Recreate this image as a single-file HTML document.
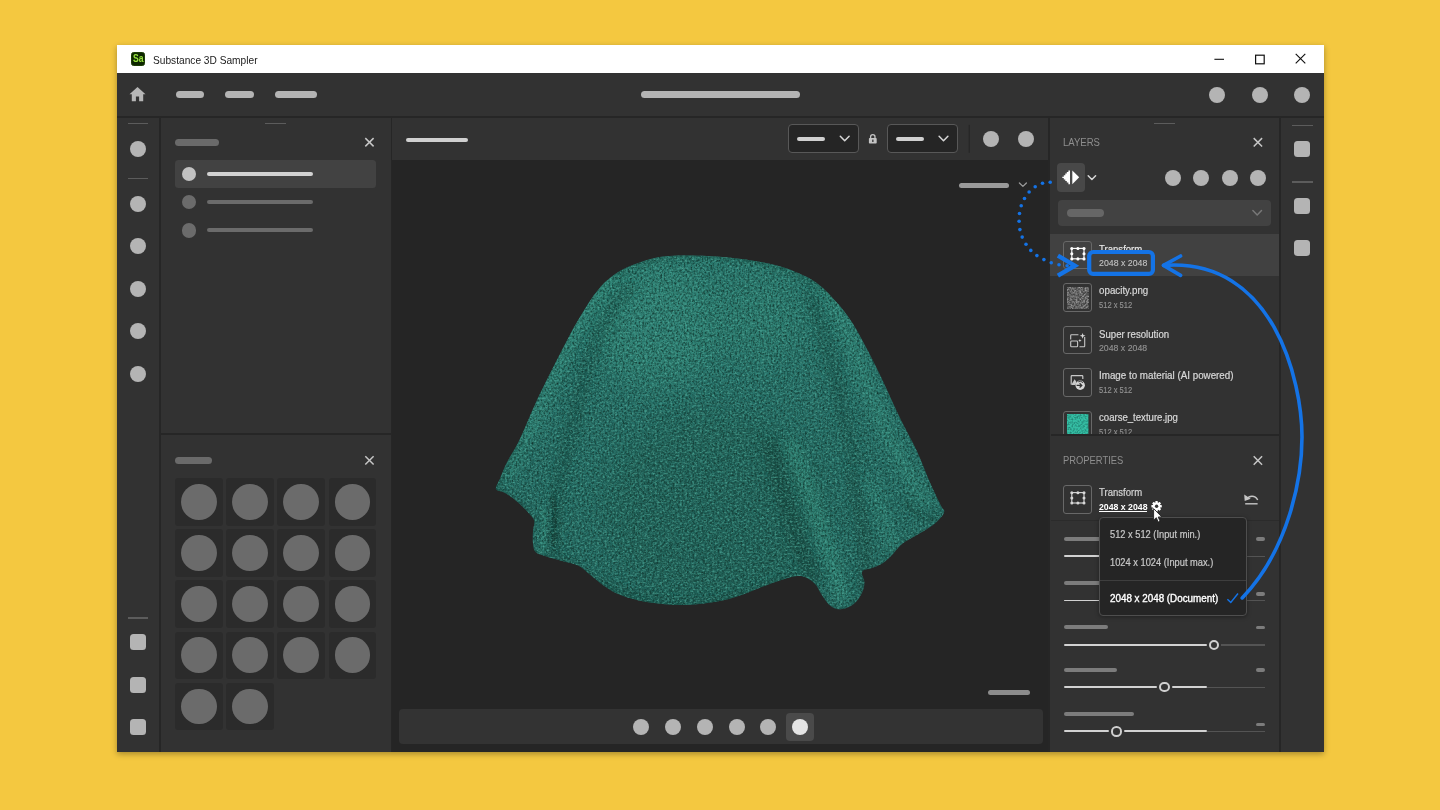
<!DOCTYPE html>
<html lang="en">
<head>
<meta charset="utf-8">
<title>Substance 3D Sampler</title>
<style>
*{box-sizing:border-box;margin:0;padding:0}
html,body{width:1440px;height:810px;overflow:hidden}
body{background:#f4c840;font-family:"Liberation Sans",sans-serif;position:relative}
.a{position:absolute}
#win{position:absolute;left:116.8px;top:45.1px;width:1207px;height:706.6px;background:#323232;box-shadow:0 1.5px 6px rgba(0,0,0,.32);overflow:hidden}
/* everything inside #win is positioned in PAGE coordinates via this shifter */
#o{position:absolute;left:-116.8px;top:-45.1px;width:1440px;height:810px}
.pill{position:absolute;border-radius:10px}
.c{position:absolute;border-radius:50%}
.sq{position:absolute;width:16px;height:16px;border-radius:3.5px;background:#b4b4b4}
.ln{position:absolute;height:1.6px;background:#5c5c5c}
.bd{position:absolute;background:#262626}
.tile{position:absolute;width:47.6px;height:47.6px;border-radius:3px;background:#2b2b2b}
.tile i{position:absolute;left:6px;top:5.8px;width:35.8px;height:35.8px;border-radius:50%;background:#6b6b6b}
.t{position:absolute;white-space:nowrap;line-height:1;transform-origin:0 50%}
.nm{font-size:10px;color:#d8d8d8;-webkit-text-stroke:.2px #d8d8d8}
.sz{font-size:9px;color:#929292;-webkit-text-stroke:.15px #929292}
.th{position:absolute;width:28.4px;height:28.4px;border:1px solid #686868;border-radius:3px}
svg{position:absolute;overflow:visible}
</style>
</head>
<body>
<div id="win"><div id="o">

<!-- TITLE BAR -->
<div class="a" id="titlebar" style="left:116px;top:45px;width:1209px;height:28.4px;background:#fff"></div>
<div class="a" style="left:130.8px;top:52px;width:14.5px;height:14.4px;border-radius:2.6px;background:#0d2600;border:1px solid #1c3d05"></div>
<div class="t" id="sa" style="left:132.7px;top:53.7px;font-size:10px;font-weight:bold;color:#98e43c;transform:scaleX(.86)">Sa</div>
<div class="t" id="title" style="transform:scaleX(0.884);left:152.6px;top:54.7px;font-size:11.5px;color:#1a1a1a;">Substance 3D Sampler</div>
<svg id="wc" style="left:1200px;top:45px" width="120" height="28" viewBox="1200 45 120 28">
  <path d="M1214.4 59.3h9.6" stroke="#111" stroke-width="1.1" fill="none"/>
  <rect x="1255.6" y="55.2" width="8.6" height="8.6" stroke="#111" stroke-width="1.2" fill="none"/>
  <path d="M1295.7 53.8l9.6 9.6M1305.3 53.8l-9.6 9.6" stroke="#111" stroke-width="1.15" fill="none"/>
</svg>

<!-- TOP TOOLBAR -->
<div class="bd" style="left:116px;top:115.8px;width:1209px;height:1.8px"></div>
<svg id="home" style="left:129px;top:86px" width="18" height="16" viewBox="129 86 18 16">
  <path d="M137.5 86.9l-8 7.3h2.3v7h4.1v-4.6h3.2v4.6h4.1v-7h2.3z" fill="#b6b6b6"/>
</svg>
<div class="pill" style="left:175.5px;top:90.7px;width:28.8px;height:7.6px;background:#b4b4b4"></div>
<div class="pill" style="left:225px;top:90.7px;width:28.8px;height:7.6px;background:#b4b4b4"></div>
<div class="pill" style="left:274.5px;top:90.7px;width:42.9px;height:7.6px;background:#b4b4b4"></div>
<div class="pill" style="left:640.5px;top:90.8px;width:159.3px;height:7.6px;background:#b4b4b4"></div>
<div class="c" style="left:1209.3px;top:86.6px;width:16px;height:16px;background:#b4b4b4"></div>
<div class="c" style="left:1251.6px;top:86.6px;width:16px;height:16px;background:#b4b4b4"></div>
<div class="c" style="left:1294px;top:86.6px;width:16px;height:16px;background:#b4b4b4"></div>

<!-- VERTICAL BORDERS -->
<div class="bd" style="left:159.2px;top:117px;width:1.8px;height:640px"></div>
<div class="bd" style="left:390.5px;top:117px;width:1.8px;height:640px"></div>
<div class="bd" style="left:1048.4px;top:117px;width:1.8px;height:640px"></div>
<div class="bd" style="left:1279.1px;top:117px;width:1.9px;height:640px"></div>

<!-- LEFT STRIP -->
<div class="ln" style="left:127.5px;top:122.7px;width:20.8px"></div>
<div class="c" style="left:129.8px;top:141px;width:16px;height:16px;background:#b4b4b4"></div>
<div class="ln" style="left:127.5px;top:177.6px;width:20.8px"></div>
<div class="c" style="left:129.8px;top:195.8px;width:16px;height:16px;background:#b4b4b4"></div>
<div class="c" style="left:129.8px;top:238.3px;width:16px;height:16px;background:#b4b4b4"></div>
<div class="c" style="left:129.8px;top:280.8px;width:16px;height:16px;background:#b4b4b4"></div>
<div class="c" style="left:129.8px;top:323.3px;width:16px;height:16px;background:#b4b4b4"></div>
<div class="c" style="left:129.8px;top:365.8px;width:16px;height:16px;background:#b4b4b4"></div>
<div class="ln" style="left:127.5px;top:617.2px;width:20.8px"></div>
<div class="sq" style="left:129.9px;top:634.2px"></div>
<div class="sq" style="left:129.9px;top:676.7px"></div>
<div class="sq" style="left:129.9px;top:719.2px"></div>

<!-- LEFT PANEL 1 -->
<div class="ln" style="left:265px;top:122.7px;width:21.2px"></div>
<div class="pill" style="left:175px;top:138.6px;width:44.2px;height:7.3px;background:#6a6a6a"></div>
<svg style="left:364px;top:137px" width="12" height="12" viewBox="364 137 12 12"><path d="M365.3 138.1l8.3 8.3M373.6 138.1l-8.3 8.3" stroke="#c6c6c6" stroke-width="1.5" fill="none"/></svg>
<div class="a" style="left:175px;top:160px;width:201.4px;height:28px;border-radius:3.5px;background:#424242"></div>
<div class="c" style="left:182px;top:166.9px;width:14.4px;height:14.4px;background:#c2c2c2"></div>
<div class="pill" style="left:207px;top:172px;width:105.8px;height:4.1px;background:#d2d2d2"></div>
<div class="c" style="left:182px;top:195.1px;width:14.4px;height:14.4px;background:#6b6b6b"></div>
<div class="pill" style="left:207px;top:200.2px;width:105.8px;height:4.1px;background:#6b6b6b"></div>
<div class="c" style="left:182px;top:223.3px;width:14.4px;height:14.4px;background:#6b6b6b"></div>
<div class="pill" style="left:207px;top:228.4px;width:105.8px;height:4.1px;background:#6b6b6b"></div>

<!-- LEFT PANEL 2 -->
<div class="bd" style="left:161px;top:433.4px;width:229.5px;height:1.9px"></div>
<div class="pill" style="left:175px;top:456.7px;width:37px;height:7.2px;background:#6a6a6a"></div>
<svg style="left:364px;top:455px" width="12" height="12" viewBox="364 455 12 12"><path d="M365.3 456.2l8.3 8.3M373.6 456.2l-8.3 8.3" stroke="#c6c6c6" stroke-width="1.5" fill="none"/></svg>
<div class="tile" style="left:175px;top:478px"><i></i></div>
<div class="tile" style="left:226.25px;top:478px"><i></i></div>
<div class="tile" style="left:277.45px;top:478px"><i></i></div>
<div class="tile" style="left:328.7px;top:478px"><i></i></div>
<div class="tile" style="left:175px;top:529.2px"><i></i></div>
<div class="tile" style="left:226.25px;top:529.2px"><i></i></div>
<div class="tile" style="left:277.45px;top:529.2px"><i></i></div>
<div class="tile" style="left:328.7px;top:529.2px"><i></i></div>
<div class="tile" style="left:175px;top:580.4px"><i></i></div>
<div class="tile" style="left:226.25px;top:580.4px"><i></i></div>
<div class="tile" style="left:277.45px;top:580.4px"><i></i></div>
<div class="tile" style="left:328.7px;top:580.4px"><i></i></div>
<div class="tile" style="left:175px;top:631.6px"><i></i></div>
<div class="tile" style="left:226.25px;top:631.6px"><i></i></div>
<div class="tile" style="left:277.45px;top:631.6px"><i></i></div>
<div class="tile" style="left:328.7px;top:631.6px"><i></i></div>
<div class="tile" style="left:175px;top:682.8px"><i></i></div>
<div class="tile" style="left:226.25px;top:682.8px"><i></i></div>

<!-- VIEWPORT -->
<div class="a" id="vp" style="left:392.3px;top:159.7px;width:656.1px;height:600px;background:#252525"></div>
<div class="pill" style="left:406.3px;top:138px;width:62px;height:4.4px;background:#d0d0d0"></div>
<div class="a" style="left:788.4px;top:124.4px;width:70.4px;height:28.6px;border:1px solid #585858;border-radius:4px;background:#252525"></div>
<div class="pill" style="left:796.8px;top:136.5px;width:28.4px;height:4.4px;background:#d0d0d0"></div>
<div class="a" style="left:887.2px;top:124.4px;width:70.4px;height:28.6px;border:1px solid #585858;border-radius:4px;background:#252525"></div>
<div class="pill" style="left:895.8px;top:136.5px;width:28.4px;height:4.4px;background:#d0d0d0"></div>
<svg style="left:780px;top:117px" width="270" height="80" viewBox="780 117 270 80">
  <path d="M840.3 136.2l4.4 4.5 4.4-4.5" stroke="#d6d6d6" stroke-width="1.5" fill="none" stroke-linecap="round" stroke-linejoin="round"/>
  <path d="M939.1 136.2l4.4 4.5 4.4-4.5" stroke="#d6d6d6" stroke-width="1.5" fill="none" stroke-linecap="round" stroke-linejoin="round"/>
  <!-- lock -->
  <rect x="868.9" y="138" width="7.8" height="5.6" rx="0.8" fill="#c4c4c4"/>
  <path d="M870.6 138.2v-1.4a2.2 2.2 0 0 1 4.4 0v1.4" stroke="#c4c4c4" stroke-width="1.3" fill="none"/>
  <rect x="872.2" y="139.6" width="1.3" height="2.4" fill="#323232"/>
  <rect x="968.6" y="124.8" width="1.2" height="28" fill="#262626"/>
  <path d="M1019.4 183l3.5 3.4 3.5-3.4" stroke="#9a9a9a" stroke-width="1.3" fill="none" stroke-linecap="round" stroke-linejoin="round"/>
</svg>
<div class="c" style="left:983.2px;top:130.6px;width:16px;height:16px;background:#b4b4b4"></div>
<div class="c" style="left:1018.4px;top:130.6px;width:16px;height:16px;background:#b4b4b4"></div>
<div class="pill" style="left:959.2px;top:183.3px;width:49.7px;height:4.3px;background:#9a9a9a"></div>
<div class="pill" style="left:988px;top:690.4px;width:41.8px;height:4.2px;background:#8c8c8c"></div>
<svg id="cloth" style="left:480px;top:240px" width="480" height="390" viewBox="480 240 480 390">
<defs>
  <clipPath id="cc"><path d="M519.5 440.0C524.6 429.3 531.4 412.0 538.0 398.0C544.6 384.0 552.2 369.2 559.0 356.0C565.8 342.8 572.2 330.1 578.8 319.0C585.4 307.9 591.9 297.2 598.5 289.4C605.1 281.6 611.3 276.6 618.3 272.1C625.3 267.6 632.7 264.9 640.5 262.2C648.3 259.5 654.9 257.3 665.2 256.2C675.5 255.1 690.2 255.4 702.2 255.8C714.2 256.2 725.0 257.0 737.0 258.5C749.0 260.0 763.7 262.2 774.0 264.7C784.3 267.2 791.4 270.0 798.8 273.3C806.2 276.6 811.9 279.2 818.5 284.4C825.1 289.5 832.5 297.6 838.3 304.2C844.0 310.8 848.0 316.2 853.0 324.0C858.0 331.8 863.0 341.6 868.0 351.0C873.0 360.4 877.8 370.4 882.7 380.7C887.6 391.0 893.8 404.9 897.5 412.8C901.2 420.7 901.7 421.5 905.0 428.0C908.3 434.5 913.2 443.1 917.3 452.0C921.4 460.9 925.7 472.8 929.6 481.7C933.5 490.6 938.3 500.0 940.7 505.2C943.1 510.4 945.0 509.5 944.0 512.6C943.0 515.7 939.1 520.0 934.6 523.7C930.1 527.4 922.6 531.5 917.3 534.8C911.9 538.1 906.5 540.4 902.5 543.5C898.5 546.6 896.3 550.4 893.3 553.5C890.3 556.6 887.7 559.6 884.4 562.0C881.1 564.4 877.0 566.0 873.3 567.6C869.6 569.2 863.7 569.1 862.2 571.5C860.7 573.9 864.4 578.8 864.4 582.2C864.4 585.7 863.7 588.9 862.2 592.2C860.7 595.5 858.4 599.5 855.6 602.2C852.8 604.9 848.8 607.2 845.6 608.3C842.5 609.4 839.5 609.5 836.7 608.9C833.9 608.2 831.3 606.6 828.9 604.4C826.5 602.2 824.4 598.9 822.2 595.6C820.0 592.3 818.2 587.4 815.6 584.4C813.0 581.4 809.7 579.2 806.7 577.8C803.7 576.4 801.5 575.9 797.8 576.1C794.1 576.3 790.3 577.1 784.4 578.9C778.5 580.7 769.6 583.9 762.2 586.7C754.8 589.5 747.5 593.0 740.0 595.5C732.5 598.0 725.4 600.0 717.0 601.5C708.6 603.0 698.9 604.3 689.9 604.7C680.9 605.1 671.4 604.8 662.7 604.0C654.1 603.2 645.4 601.9 638.0 600.2C630.6 598.6 624.0 596.6 618.3 594.1C612.5 591.6 608.0 588.5 603.5 585.4C599.0 582.3 595.2 578.9 591.1 575.6C587.0 572.3 583.7 568.2 578.8 565.7C573.9 563.2 567.3 562.4 561.5 560.7C555.7 559.1 548.5 557.2 544.2 555.8C539.9 554.4 537.5 554.1 535.6 552.1C533.7 550.1 533.4 547.0 533.0 543.5C532.6 540.0 532.8 534.7 533.0 531.0C533.2 527.3 534.9 524.1 534.3 521.2C533.7 518.3 532.3 517.1 529.4 513.8C526.5 510.5 521.1 505.0 517.0 501.5C512.9 498.0 508.2 494.9 504.7 492.8C501.2 490.7 496.8 491.4 496.0 489.1C495.2 486.9 497.9 483.8 499.8 479.3C501.7 474.8 503.9 468.6 507.2 462.0C510.5 455.4 514.4 450.7 519.5 440.0Z"/></clipPath>
  <linearGradient id="cg" x1="0" y1="0" x2="0" y2="1">
    <stop offset="0" stop-color="#2b7a70"/><stop offset=".45" stop-color="#277068"/><stop offset="1" stop-color="#246860"/>
  </linearGradient>
  <filter id="b6" x="-50%" y="-50%" width="200%" height="200%"><feGaussianBlur stdDeviation="6"/></filter>
  <filter id="b14" x="-50%" y="-50%" width="200%" height="200%"><feGaussianBlur stdDeviation="14"/></filter>
  <filter id="b3" x="-50%" y="-50%" width="200%" height="200%"><feGaussianBlur stdDeviation="2.5"/></filter>
  <filter id="nd" x="0" y="0" width="100%" height="100%" color-interpolation-filters="sRGB">
    <feTurbulence type="fractalNoise" baseFrequency="0.56 0.4" numOctaves="2" seed="4" result="n"/>
    <feColorMatrix in="n" type="matrix" values="0 0 0 0 0.07  0 0 0 0 0.22  0 0 0 0 0.19  2.0 0 0 0 -0.75"/>
    <feComposite in2="SourceGraphic" operator="in"/>
  </filter>
  <filter id="nl" x="0" y="0" width="100%" height="100%" color-interpolation-filters="sRGB">
    <feTurbulence type="fractalNoise" baseFrequency="0.4 0.56" numOctaves="2" seed="11" result="n"/>
    <feColorMatrix in="n" type="matrix" values="0 0 0 0 0.33  0 0 0 0 0.70  0 0 0 0 0.63  0 1.7 0 0 -0.77"/>
    <feComposite in2="SourceGraphic" operator="in"/>
  </filter>
</defs>
<g clip-path="url(#cc)">
  <rect x="480" y="240" width="480" height="390" fill="url(#cg)"/>
  <!-- broad shading -->
  <ellipse cx="715" cy="505" rx="110" ry="95" fill="#1d564b" opacity=".36" filter="url(#b14)"/>
  <ellipse cx="655" cy="325" rx="62" ry="60" fill="#3c9c88" opacity=".38" filter="url(#b14)"/>
  <ellipse cx="760" cy="320" rx="45" ry="40" fill="#38937f" opacity=".3" filter="url(#b14)"/>
  <!-- top edge falloff -->
  <path d="M598 289C618 268 650 257 702 256C760 258 805 270 838 304" stroke="#1f5a4e" stroke-width="6" fill="none" opacity=".45" filter="url(#b3)"/>
  <!-- left: valley (dark) + ridge (light) -->
  <path d="M633 284C610 305 596 335 584 380C572 430 560 470 556 506C553 530 554 546 556 560" stroke="#194c42" stroke-width="9" fill="none" opacity=".7" filter="url(#b6)"/>
  <path d="M613 272C588 296 570 335 552 380C538 415 520 450 503 480" stroke="#40a38e" stroke-width="11" fill="none" opacity=".55" filter="url(#b6)"/>
  <path d="M520 440C510 460 502 475 496 489C510 497 525 508 534 521" stroke="#17463d" stroke-width="5" fill="none" opacity=".5" filter="url(#b3)"/>
  <!-- right: valley + ridge -->
  <path d="M806 290C822 320 832 360 840 400C846 430 852 450 858 466" stroke="#194c42" stroke-width="9" fill="none" opacity=".65" filter="url(#b6)"/>
  <path d="M820 280C842 310 852 345 866 385C880 420 900 460 926 506" stroke="#40a38e" stroke-width="11" fill="none" opacity=".5" filter="url(#b6)"/>
  <!-- right-bottom folds -->
  <path d="M768 440C780 480 790 520 800 548C806 562 812 572 818 580" stroke="#163f37" stroke-width="11" fill="none" opacity=".7" filter="url(#b6)"/>
  <path d="M790 440C806 480 818 520 830 556C836 575 840 590 843 600" stroke="#43a892" stroke-width="12" fill="none" opacity=".55" filter="url(#b6)"/>
  <path d="M850 470C858 500 864 530 866 560C866 572 864 584 862 592" stroke="#173f37" stroke-width="8" fill="none" opacity=".6" filter="url(#b6)"/>
  <path d="M868 478C880 505 888 530 894 552" stroke="#40a38e" stroke-width="9" fill="none" opacity=".45" filter="url(#b6)"/>
  <path d="M905 500C915 515 925 522 938 516" stroke="#17463d" stroke-width="6" fill="none" opacity=".45" filter="url(#b3)"/>
  <!-- left fold inner -->
  <path d="M553 497C556 512 556 530 553 546" stroke="#0f302a" stroke-width="4.5" fill="none" opacity=".85" filter="url(#b3)"/>
  <path d="M543 508C546 522 545 540 541 554" stroke="#44aa94" stroke-width="5" fill="none" opacity=".5" filter="url(#b3)"/>
  <!-- bottom edge darkening -->
  <path d="M556 560C600 592 660 608 700 607C740 604 780 584 800 578" stroke="#184a40" stroke-width="12" fill="none" opacity=".55" filter="url(#b6)"/>
  <!-- texture -->
  <rect x="480" y="240" width="480" height="390" fill="#000" filter="url(#nd)"/>
  <rect x="480" y="240" width="480" height="390" fill="#000" filter="url(#nl)"/>
</g>
</svg>
<!-- viewport bottom bar -->
<div class="a" style="left:399.4px;top:709.4px;width:643.5px;height:35px;border-radius:4px;background:#333"></div>
<div class="a" style="left:786.4px;top:713.1px;width:28px;height:27.6px;border-radius:4px;background:#4a4a4a"></div>
<div class="c" style="left:633.3px;top:718.7px;width:16px;height:16px;background:#b4b4b4"></div>
<div class="c" style="left:664.9px;top:718.7px;width:16px;height:16px;background:#b4b4b4"></div>
<div class="c" style="left:697px;top:718.7px;width:16px;height:16px;background:#b4b4b4"></div>
<div class="c" style="left:728.7px;top:718.7px;width:16px;height:16px;background:#b4b4b4"></div>
<div class="c" style="left:760.3px;top:718.7px;width:16px;height:16px;background:#b4b4b4"></div>
<div class="c" style="left:792.2px;top:718.7px;width:16px;height:16px;background:#e4e4e4"></div>

<!-- LAYERS PANEL -->
<div class="ln" style="left:1154px;top:122.8px;width:21.3px"></div>
<div class="t" id="tLayers" style="transform:scaleX(0.953);left:1062.6px;top:138.4px;font-size:10px;color:#8e8e8e">LAYERS</div>
<svg style="left:1252px;top:137px" width="12" height="12" viewBox="1252 137 12 12"><path d="M1253.7 138.1l8.4 8.4M1262.1 138.1l-8.4 8.4" stroke="#c6c6c6" stroke-width="1.5" fill="none"/></svg>
<div class="a" style="left:1056.8px;top:163.3px;width:28.2px;height:28.3px;border-radius:4px;background:#484848"></div>
<svg style="left:1056px;top:163px" width="44" height="30" viewBox="1056 163 44 30">
  <path d="M1070 170.4v13.8h-1.6v-1.6h-1.6v-1.6h-1.5v-1.6h-1.5v-1.5h-1.5v-1.2h1.5v-1.5h1.5v-1.6h1.5v-1.6h1.6v-1.6z" fill="#fff"/>
  <path d="M1072.3 170.4l6.9 6.9-6.9 6.9z" fill="#fff"/>
  <path d="M1088.2 175.7l3.7 3.8 3.7-3.8" stroke="#d6d6d6" stroke-width="1.5" fill="none" stroke-linecap="round" stroke-linejoin="round"/>
</svg>
<div class="c" style="left:1165.1px;top:169.6px;width:16px;height:16px;background:#b4b4b4"></div>
<div class="c" style="left:1193.3px;top:169.6px;width:16px;height:16px;background:#b4b4b4"></div>
<div class="c" style="left:1221.5px;top:169.6px;width:16px;height:16px;background:#b4b4b4"></div>
<div class="c" style="left:1249.8px;top:169.6px;width:16px;height:16px;background:#b4b4b4"></div>
<div class="a" style="left:1057.8px;top:199.7px;width:213.2px;height:26.4px;border-radius:4px;background:#424242"></div>
<div class="pill" style="left:1067.2px;top:209.2px;width:37px;height:7.4px;background:#666"></div>
<svg style="left:1250px;top:208px" width="14" height="10" viewBox="1250 208 14 10"><path d="M1252.9 210.6l4.3 4.4 4.3-4.4" stroke="#787878" stroke-width="1.5" fill="none" stroke-linecap="round" stroke-linejoin="round"/></svg>

<!-- layer rows -->
<div class="a" style="left:1050.2px;top:233.8px;width:228.9px;height:42.5px;background:#414141"></div>
<div class="a" id="layerclip" style="left:1050.5px;top:233.8px;width:228.6px;height:200.4px;overflow:hidden"><div class="a" style="left:-1050.5px;top:-233.8px;width:1440px;height:810px">
  <div class="th" style="left:1063.4px;top:241px"></div>
  <div class="t nm" id="n1" style="transform:scaleX(0.958);left:1099.2px;top:244.7px;color:#f2f2f2">Transform</div>
  <div class="th" style="left:1063.4px;top:283.3px"></div>
  <svg id="opthumb" style="left:1067px;top:286.9px" width="21.3" height="21.3"><filter id="tn" x="0" y="0" width="100%" height="100%" color-interpolation-filters="sRGB"><feTurbulence type="fractalNoise" baseFrequency=".55" numOctaves="2" seed="7"/><feColorMatrix type="matrix" values="0 0 0 0 .62  0 0 0 0 .62  0 0 0 0 .62  2.2 0 0 0 -.75"/></filter><rect width="21.3" height="21.3" fill="#454545"/><rect width="21.3" height="21.3" filter="url(#tn)"/></svg>
  <div class="t nm" id="n2" style="transform:scaleX(0.978);left:1099.2px;top:285.9px">opacity.png</div>
  <div class="t sz" id="s2" style="transform:scaleX(0.839);left:1099.2px;top:301.3px">512 x 512</div>
  <div class="th" style="left:1063.4px;top:325.8px"></div>
  <div class="t nm" id="n3" style="transform:scaleX(0.963);left:1099.2px;top:329.6px">Super resolution</div>
  <div class="t sz" id="s3" style="transform:scaleX(0.971);left:1099.2px;top:343.5px">2048 x 2048</div>
  <div class="th" style="left:1063.4px;top:368.2px"></div>
  <div class="t nm" id="n4" style="transform:scaleX(0.980);left:1099.2px;top:370.8px">Image to material (AI powered)</div>
  <div class="t sz" id="s4" style="transform:scaleX(0.839);left:1099.2px;top:385.9px">512 x 512</div>
  <div class="th" style="left:1063.4px;top:410.6px"></div>
  <svg id="cothumb" style="left:1067px;top:414.2px" width="21.3" height="21.3"><filter id="tn2" x="0" y="0" width="100%" height="100%" color-interpolation-filters="sRGB"><feTurbulence type="fractalNoise" baseFrequency=".6" numOctaves="2" seed="9"/><feColorMatrix type="matrix" values="0 0 0 0 .12  0 0 0 0 .5  0 0 0 0 .44  2.2 0 0 0 -.85"/></filter><rect width="21.3" height="21.3" fill="#35bea4"/><rect width="21.3" height="21.3" filter="url(#tn2)"/></svg>
  <div class="t nm" id="n5" style="transform:scaleX(0.959);left:1099.2px;top:413.3px">coarse_texture.jpg</div>
  <div class="t sz" id="s5" style="transform:scaleX(0.839);left:1099.2px;top:428.3px">512 x 512</div>
</div></div>
<svg id="licons" style="left:1060px;top:240px" width="34" height="160" viewBox="1060 240 34 160">
  <!-- transform icon -->
  <g fill="#fff" stroke="none">
    <rect x="1071.8" y="248.4" width="12.2" height="10.4" fill="none" stroke="#fff" stroke-width="1.1"/>
    <circle cx="1071.8" cy="248.5" r="1.55"/><circle cx="1077.9" cy="248.5" r="1.55"/><circle cx="1084" cy="248.5" r="1.55"/>
    <circle cx="1071.8" cy="253.7" r="1.55"/><circle cx="1084" cy="253.7" r="1.55"/>
    <circle cx="1071.8" cy="258.9" r="1.55"/><circle cx="1077.9" cy="258.9" r="1.55"/><circle cx="1084" cy="258.9" r="1.55"/>
  </g>
  <!-- super resolution icon -->
  <g fill="none" stroke="#c8c8c8" stroke-width="1.1" stroke-linejoin="round">
    <path d="M1070.7 339.6v-4.1a.8.8 0 0 1 .8-.8h6.9"/>
    <rect x="1070.7" y="341" width="6.9" height="5.8" rx=".9"/>
    <path d="M1079.5 346.8h4.4a.8.8 0 0 0 .8-.8v-9"/>
  </g>
  <path d="M1082.6 332.9l.8 2.1 2.1.8-2.1.8-.8 2.1-.8-2.1-2.1-.8 2.1-.8z" fill="#d4d4d4"/>
  <path d="M1079.9 338.9l.5 1.2 1.2.5-1.2.5-.5 1.2-.5-1.2-1.2-.5 1.2-.5z" fill="#d4d4d4"/>
  <!-- image to material icon -->
  <g>
    <path d="M1071.2 384.4v-8a.7.7 0 0 1 .7-.7h10.2a.7.7 0 0 1 .7.7v2.6" fill="none" stroke="#c8c8c8" stroke-width="1.2"/>
    <path d="M1071.2 384.9l3.4-5.6 1.9 2.6-1 3z" fill="#c8c8c8"/>
    <circle cx="1080.2" cy="385.2" r="4.7" fill="#d6d6d6"/>
    <path d="M1076.6 385.4h4.2M1079.6 383.3l2.2 2.1-2.2 2.1" stroke="#333" stroke-width="1.2" fill="none"/>
    <path d="M1078.2 381.8a3.9 3.9 0 0 1 4.8.9" stroke="#333" stroke-width=".9" fill="none"/>
  </g>
</svg>

<!-- PROPERTIES PANEL -->
<div class="bd" style="left:1050.5px;top:434.1px;width:228.6px;height:1.8px"></div>
<div class="t" id="tProps" style="transform:scaleX(0.937);left:1062.9px;top:455.8px;font-size:10px;color:#8e8e8e">PROPERTIES</div>
<svg style="left:1252px;top:455px" width="12" height="12" viewBox="1252 455 12 12"><path d="M1253.7 456.3l8.4 8.4M1262.1 456.3l-8.4 8.4" stroke="#c6c6c6" stroke-width="1.5" fill="none"/></svg>
<div class="th" style="left:1063.4px;top:485.2px"></div>
<svg style="left:1060px;top:484px" width="34" height="32" viewBox="1060 484 34 32">
  <g fill="#d8d8d8">
    <rect x="1071.8" y="492.6" width="12.2" height="10.4" fill="none" stroke="#d8d8d8" stroke-width="1.1"/>
    <circle cx="1071.8" cy="492.7" r="1.5"/><circle cx="1077.9" cy="492.7" r="1.5"/><circle cx="1084" cy="492.7" r="1.5"/>
    <circle cx="1071.8" cy="497.9" r="1.5"/><circle cx="1084" cy="497.9" r="1.5"/>
    <circle cx="1071.8" cy="503.1" r="1.5"/><circle cx="1077.9" cy="503.1" r="1.5"/><circle cx="1084" cy="503.1" r="1.5"/>
  </g>
</svg>
<div class="t nm" id="pn" style="transform:scaleX(0.954);left:1099.3px;top:487.9px;color:#d2d2d2">Transform</div>
<div class="t" id="ps" style="transform:scaleX(0.969);left:1099.1px;top:502.9px;font-size:9px;font-weight:bold;color:#fff">2048 x 2048</div>
<div class="a" style="left:1099.1px;top:511.1px;width:48.4px;height:1px;background:#fff"></div>
<div class="a" style="left:1050.5px;top:520px;width:228.6px;height:1px;background:#2b2b2b"></div>
<svg id="undo" style="left:1242px;top:490px" width="20" height="18" viewBox="1242 490 20 18">
  <path d="M1245.2 503.8h12.4" stroke="#c6c6c6" stroke-width="1.4" fill="none"/>
  <path d="M1246.3 499.6c2.6-4.2 8.6-4.8 11.4.4" stroke="#c6c6c6" stroke-width="1.5" fill="none"/>
  <path d="M1244.2 494.6l.5 6.4 6-2.3z" fill="#c6c6c6"/>
</svg>
<!-- SLIDERS -->
<div class="pill" style="left:1063.7px;top:537px;width:50px;height:3.8px;background:#7c7c7c"></div>
<div class="pill" style="left:1256.2px;top:537px;width:8.8px;height:3.8px;background:#7c7c7c"></div>
<div class="a" style="left:1063.7px;top:555.4px;width:143.2px;height:1.8px;border-radius:1px;background:#d2d2d2"></div>
<div class="a" style="left:1206.9px;top:555.6px;width:58.1px;height:1.7px;background:#545454"></div>
<div class="pill" style="left:1063.7px;top:581.3px;width:50px;height:3.8px;background:#7c7c7c"></div>
<div class="pill" style="left:1256.2px;top:591.9px;width:8.8px;height:3.8px;background:#7c7c7c"></div>
<div class="a" style="left:1063.7px;top:599.5px;width:143.2px;height:1.8px;border-radius:1px;background:#d2d2d2"></div>
<div class="a" style="left:1206.9px;top:599.7px;width:58.1px;height:1.7px;background:#545454"></div>
<div class="pill" style="left:1063.7px;top:625.3px;width:43.9px;height:3.8px;background:#7c7c7c"></div>
<div class="pill" style="left:1256.2px;top:625.6px;width:8.8px;height:3.8px;background:#7c7c7c"></div>
<div class="a" style="left:1063.7px;top:644.1px;width:142.9px;height:1.8px;border-radius:1px;background:#d2d2d2"></div>
<div class="a" style="left:1221.0px;top:644.3000000000001px;width:44.0px;height:1.7px;background:#545454"></div>
<div class="c" style="left:1208.5px;top:639.7px;width:10.6px;height:10.6px;border:2px solid #cfcfcf"></div>
<div class="pill" style="left:1063.7px;top:668px;width:52.9px;height:3.8px;background:#7c7c7c"></div>
<div class="pill" style="left:1256.2px;top:668px;width:8.8px;height:3.8px;background:#7c7c7c"></div>
<div class="a" style="left:1063.7px;top:686.3000000000001px;width:93.4px;height:1.8px;border-radius:1px;background:#d2d2d2"></div>
<div class="a" style="left:1171.5px;top:686.3000000000001px;width:35.4px;height:1.8px;border-radius:1px;background:#d2d2d2"></div>
<div class="a" style="left:1206.9px;top:686.5000000000001px;width:58.1px;height:1.7px;background:#545454"></div>
<div class="c" style="left:1159.0px;top:681.9px;width:10.6px;height:10.6px;border:2px solid #cfcfcf"></div>
<div class="pill" style="left:1063.7px;top:712.1px;width:70.3px;height:3.8px;background:#7c7c7c"></div>
<div class="pill" style="left:1256.2px;top:722.6px;width:8.8px;height:3.8px;background:#7c7c7c"></div>
<div class="a" style="left:1063.7px;top:730.4px;width:45.7px;height:1.8px;border-radius:1px;background:#d2d2d2"></div>
<div class="a" style="left:1123.8px;top:730.4px;width:83.1px;height:1.8px;border-radius:1px;background:#d2d2d2"></div>
<div class="a" style="left:1206.9px;top:730.6px;width:58.1px;height:1.7px;background:#545454"></div>
<div class="c" style="left:1111.3px;top:726.0px;width:10.6px;height:10.6px;border:2px solid #cfcfcf"></div>
<!-- POPUP -->
<div class="a" id="popup" style="left:1099.4px;top:516.9px;width:147.8px;height:98.8px;border:1px solid #4e4e4e;border-radius:4px;background:#252525;box-shadow:0 1px 4px rgba(0,0,0,.35)"></div>
<div class="t" id="p1" style="-webkit-text-stroke:.2px #c8c8c8;transform:scaleX(0.928);left:1110.3px;top:529.6px;font-size:10px;color:#c8c8c8">512 x 512 (Input min.)</div>
<div class="t" id="p2" style="-webkit-text-stroke:.2px #c8c8c8;transform:scaleX(0.929);left:1110.3px;top:557.9px;font-size:10px;color:#c8c8c8">1024 x 1024 (Input max.)</div>
<div class="a" style="left:1100.4px;top:579.8px;width:145.8px;height:1px;background:#3e3e3e"></div>
<div class="t" id="p3" style="-webkit-text-stroke:.35px #fff;transform:scaleX(0.983);left:1110.3px;top:594.1px;font-size:10px;color:#fff">2048 x 2048 (Document)</div>
<svg style="left:1224px;top:590px" width="18" height="16" viewBox="1224 590 18 16"><path d="M1227.4 599.2l3.4 3.3 7.2-9" stroke="#1473e6" stroke-width="1.5" fill="none"/></svg>
<!-- gear + cursor -->
<svg id="gear" style="left:1148px;top:498px" width="18" height="28" viewBox="1148 498 18 28">
  <g transform="translate(1156.6 506.3)">
    <g fill="#fff">
      <rect x="-1.2" y="-5.2" width="2.4" height="10.4" rx=".4"/>
      <rect x="-1.2" y="-5.2" width="2.4" height="10.4" rx=".4" transform="rotate(45)"/>
      <rect x="-1.2" y="-5.2" width="2.4" height="10.4" rx=".4" transform="rotate(90)"/>
      <rect x="-1.2" y="-5.2" width="2.4" height="10.4" rx=".4" transform="rotate(135)"/>
      <circle r="3.7"/>
    </g>
    <circle r="1.7" fill="#333"/>
  </g>
  <path d="M1153.6 508.6v11.6l2.7-2.5 1.9 4.4 1.9-.8-1.9-4.3 3.6-.1z" fill="#fff" stroke="#222" stroke-width=".9" stroke-linejoin="round"/>
</svg>
<!-- BLUE ANNOTATIONS -->
<svg id="ann" style="left:0;top:0" width="1440" height="810" viewBox="0 0 1440 810">
  <rect x="1089.2" y="252" width="63.7" height="21.9" rx="4" fill="#3f3f3f" stroke="#1473e6" stroke-width="4.2"/>
  <g fill="#1473e6">
    <circle cx="1050.2" cy="182.2" r="1.8"/>
    <circle cx="1042.5" cy="183.2" r="1.8"/>
    <circle cx="1035.2" cy="186.8" r="1.8"/>
    <circle cx="1029.1" cy="192" r="1.8"/>
    <circle cx="1024.5" cy="198.5" r="1.8"/>
    <circle cx="1021.2" cy="205.8" r="1.8"/>
    <circle cx="1019.5" cy="213.5" r="1.8"/>
    <circle cx="1019.1" cy="221.2" r="1.8"/>
    <circle cx="1019.9" cy="229.6" r="1.8"/>
    <circle cx="1022.2" cy="237.1" r="1.8"/>
    <circle cx="1026" cy="244.2" r="1.8"/>
    <circle cx="1030.8" cy="250.4" r="1.8"/>
    <circle cx="1036.9" cy="255.6" r="1.8"/>
    <circle cx="1043.9" cy="259.6" r="1.8"/>
    <circle cx="1051.25" cy="262.7" r="1.8"/>
    <circle cx="1059" cy="264.7" r="1.8"/>
    <circle cx="1067.1" cy="265.75" r="1.8"/>
  </g>
  <g fill="none" stroke="#1473e6">
    <path d="M1057.9 255.7L1074.9 265.7L1057.9 275.7" stroke-width="4.4" stroke-linejoin="miter" stroke-miterlimit="10"/>
    <path d="M1180.6 256L1163.5 265.4L1180.6 275.4" stroke-width="3.6" stroke-linecap="round" stroke-linejoin="round"/>
    <path d="M1163.5 265.4C1274 256.9 1302 382.2 1302 437.1C1302 477 1289.3 548.9 1242.2 597.9" stroke-width="3.6" stroke-linecap="round"/>
  </g>
</svg>
<div class="t sz" id="s1" style="transform:scaleX(0.975);left:1099.1px;top:258.6px;color:#d4d4d4">2048 x 2048</div>


<!-- RIGHT STRIP -->
<div class="ln" style="left:1292px;top:124.5px;width:20.6px"></div>
<div class="sq" style="left:1294.1px;top:141.2px"></div>
<div class="ln" style="left:1292px;top:181.2px;width:20.6px"></div>
<div class="sq" style="left:1294.1px;top:197.9px"></div>
<div class="sq" style="left:1294.1px;top:240.2px"></div>

</div></div>
</body>
</html>
